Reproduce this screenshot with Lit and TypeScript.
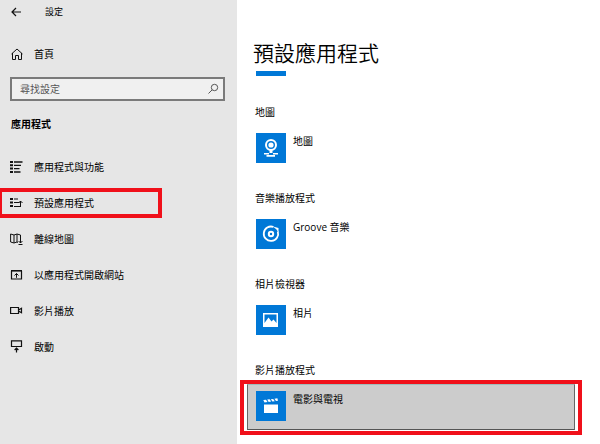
import { LitElement, html, css, svg, TemplateResult } from "lit";
import { customElement } from "lit/decorators.js";
import { classMap } from "lit/directives/class-map.js";

interface NavEntry {
  label: string;
  icon: TemplateResult;
  current?: boolean;
}

interface AppSection {
  heading: string;
  app: string;
  icon: TemplateResult;
  active?: boolean;
}

const NAV: NavEntry[] = [
  {
    label: "應用程式與功能",
    icon: svg`<path d="M0 2H3M0 5.3H3M0 8.6H3M0 12H3" stroke-width="2"/>
      <path d="M4 2H12.5M4 5.3H11M4 8.6H9.5M4 12H10.5" stroke-width="1.3"/>`,
  },
  {
    label: "預設應用程式",
    current: true,
    icon: svg`<path d="M0 3H3M0 6.5H3M0 10H3" stroke-width="2"/>
      <path d="M4 3H8M4 6.5H9.5M4 10.5H11M10.5 11V5M8.5 7L10.5 5L12.5 7"/>`,
  },
  {
    label: "離線地圖",
    icon: svg`<path d="M8 10.5L7 10L4 11L.6 10V2L4 3L7 2L10.5 3V9M4 3V11M7 2V10"/>
      <path d="M10.5 5V11M8.6 9L10.5 11L12.4 9M8.5 12.5H12.5"/>`,
  },
  {
    label: "以應用程式開啟網站",
    icon: svg`<path d="M1.5 3V11H11.5V3" stroke-width="1.2"/>
      <path d="M1 2.8H12" stroke-width="1.6"/>
      <path d="M6.5 9.8V5.5M4.5 7.5L6.5 5.5L8.5 7.5"/>`,
  },
  {
    label: "影片播放",
    icon: svg`<path d="M.6 3.5H8.5V9.5H.6ZM8.5 6L11.5 4.2V8.8L8.5 7" stroke-width="1.2"/>`,
  },
  {
    label: "啟動",
    icon: svg`<path d="M1.5 .8H11.5V6.5H1.5Z" stroke-width="1.2"/>
      <path d="M6.5 12.5V8M4.6 10L6.5 8.1L8.4 10" stroke-width="1.2"/>`,
  },
];

const SECTIONS: AppSection[] = [
  {
    heading: "地圖",
    app: "地圖",
    icon: svg`<circle cx="15" cy="12" r="5" fill="none" stroke="#fff" stroke-width="2"/>
      <circle cx="15" cy="12" r="2.6"/>
      <path d="M13.5 16.5H16.5V20H13.5Z"/>
      <path d="M8 20.8H13M17 20.8H22M10.5 22.9H19" stroke="#fff" stroke-width="1.6"/>`,
  },
  {
    heading: "音樂播放程式",
    app: "Groove 音樂",
    icon: svg`<path d="M17.5 8A7.2 7.2 0 1 0 21.8 12.5" fill="none" stroke="#fff" stroke-width="1.8"/>
      <path d="M17 7.5L22.5 9V13.5L20.5 10.5Z"/>
      <circle cx="15" cy="15" r="2.2" fill="none" stroke="#fff" stroke-width="2"/>`,
  },
  {
    heading: "相片檢視器",
    app: "相片",
    icon: svg`<path fill-rule="evenodd" d="M7 8H22V22H7ZM8.5 9.5V18L12.5 12.5L15.5 16.5L17.5 14.5L20.5 18V9.5Z"/>`,
  },
  {
    heading: "影片播放程式",
    app: "電影與電視",
    active: true,
    icon: svg`<path d="M8 13.5H22V22H8Z"/>
      <path d="M7.3 9L10 8.7L11.5 11L8.5 11.6ZM11.2 8.6L13.6 8.3L15.2 10.6L12.7 10.9ZM14.8 8.2L17.2 7.9L18.8 10.2L16.4 10.5ZM18.4 7.7L21.4 7.2L22 9.7L20 10Z"/>`,
  },
];

@customElement("app-root")
export class AppRoot extends LitElement {
  static styles = css`
    :host {
      display: grid;
      grid-template-columns: 237px minmax(0, 1fr);
      min-height: 100vh;
      background: #fff;
      color: #000;
      font: 10px/16px "Open Sans", "Noto Sans CJK TC", sans-serif;
    }
    * {
      box-sizing: border-box;
    }
    h1,
    h2,
    ul {
      margin: 0;
      padding: 0;
      font-size: inherit;
    }
    .line {
      fill: none;
      stroke: #111;
      stroke-width: 1;
      flex: none;
    }
    aside {
      background: #e6e6e6;
    }
    .top {
      display: flex;
      align-items: center;
      gap: 21px;
      height: 24px;
      padding-left: 10px;
      font-size: 9px;
    }
    .back {
      display: flex;
      border: 0;
      padding: 0;
      background: none;
    }
    .link {
      display: flex;
      align-items: center;
      gap: 10px;
      height: 36px;
      padding-left: 10px;
      color: inherit;
      text-decoration: none;
    }
    .home {
      margin-top: 12px;
    }
    .search {
      display: flex;
      align-items: center;
      height: 24px;
      margin: 5px 12px 0 10px;
      padding: 0 3px 0 8px;
      border: 2px solid #7a7a7a;
      background: #f0f0f0;
    }
    .search input {
      flex: 1;
      min-width: 0;
      border: 0;
      padding: 0;
      outline: 0;
      background: none;
      font: inherit;
    }
    .search input::placeholder {
      color: #555;
      opacity: 1;
    }
    .search .line {
      stroke: #555;
    }
    .category {
      margin: 15px 0 17px;
      padding-left: 11px;
      font-weight: 700;
    }
    .nav {
      list-style: none;
    }
    .item {
      position: relative;
    }
    .item.current::after,
    .section.active::after {
      content: "";
      position: absolute;
      border: 4px solid #f0101a;
      pointer-events: none;
    }
    .item.current::after {
      inset: 3px 75px 3px 0;
      border-left-width: 2px;
    }
    main {
      padding: 39px 25px 12px 10px;
    }
    .title {
      padding-left: 6px;
      font-size: 21px;
      line-height: 28px;
      font-weight: 350;
    }
    .strip {
      width: 30px;
      height: 5px;
      margin: 4px 0 28px 9px;
      background: #0078d7;
    }
    .sections {
      display: grid;
      gap: 18px;
    }
    .section {
      position: relative;
    }
    .section.active::after {
      inset: 18px -7px -5px;
    }
    .heading {
      padding-left: 8px;
      margin-bottom: 6px;
      font-weight: 400;
    }
    .app {
      display: flex;
      align-items: flex-start;
      gap: 7px;
      width: 100%;
      height: 46px;
      padding: 6px 8px;
      border: 1px solid transparent;
      background: none;
      color: inherit;
      font: inherit;
      text-align: left;
    }
    .active .app {
      border-color: #9fbcbc #666 #555;
      background: #ccc;
    }
    .tile {
      flex: none;
      background: #0078d7;
      fill: #fff;
    }
  `;

  private glyph(shape: TemplateResult) {
    return html`<svg class="line" width="14" height="14" viewBox="0 0 14 14" aria-hidden="true">${shape}</svg>`;
  }

  render() {
    return html`
      <aside>
        <div class="top">
          <button class="back" aria-label="返回">
            ${this.glyph(svg`<path d="M11 7H2M6 3L2 7L6 11" stroke-width="1.2"/>`)}
          </button>
          <span>設定</span>
        </div>
        <a class="link home" href="#home">
          ${this.glyph(svg`<path d="M2.5 6V12.5H5.5V8.5H8.5V12.5H11.5V6M1.5 7L7 2L12.5 7"/>`)}
          <span>首頁</span>
        </a>
        <label class="search">
          <input type="text" placeholder="尋找設定" aria-label="尋找設定" />
          ${this.glyph(svg`<circle cx="8.5" cy="5.5" r="3.2"/><path d="M6.2 7.8L2.5 11.5"/>`)}
        </label>
        <h2 class="category">應用程式</h2>
        <nav>
          <ul class="nav">
            ${NAV.map(
              (n) => html`<li class=${classMap({ item: true, current: !!n.current })}>
                <a class="link" href="#" aria-current=${n.current ? "page" : "false"}>
                  ${this.glyph(n.icon)}<span>${n.label}</span>
                </a>
              </li>`
            )}
          </ul>
        </nav>
      </aside>
      <main>
        <h1 class="title">預設應用程式</h1>
        <div class="strip"></div>
        <div class="sections">
          ${SECTIONS.map(
            (s) => html`<section class=${classMap({ section: true, active: !!s.active })}>
              <h2 class="heading">${s.heading}</h2>
              <button class="app">
                <svg class="tile" width="30" height="30" viewBox="0 0 30 30" aria-hidden="true">${s.icon}</svg>
                <span>${s.app}</span>
              </button>
            </section>`
          )}
        </div>
      </main>
    `;
  }
}
